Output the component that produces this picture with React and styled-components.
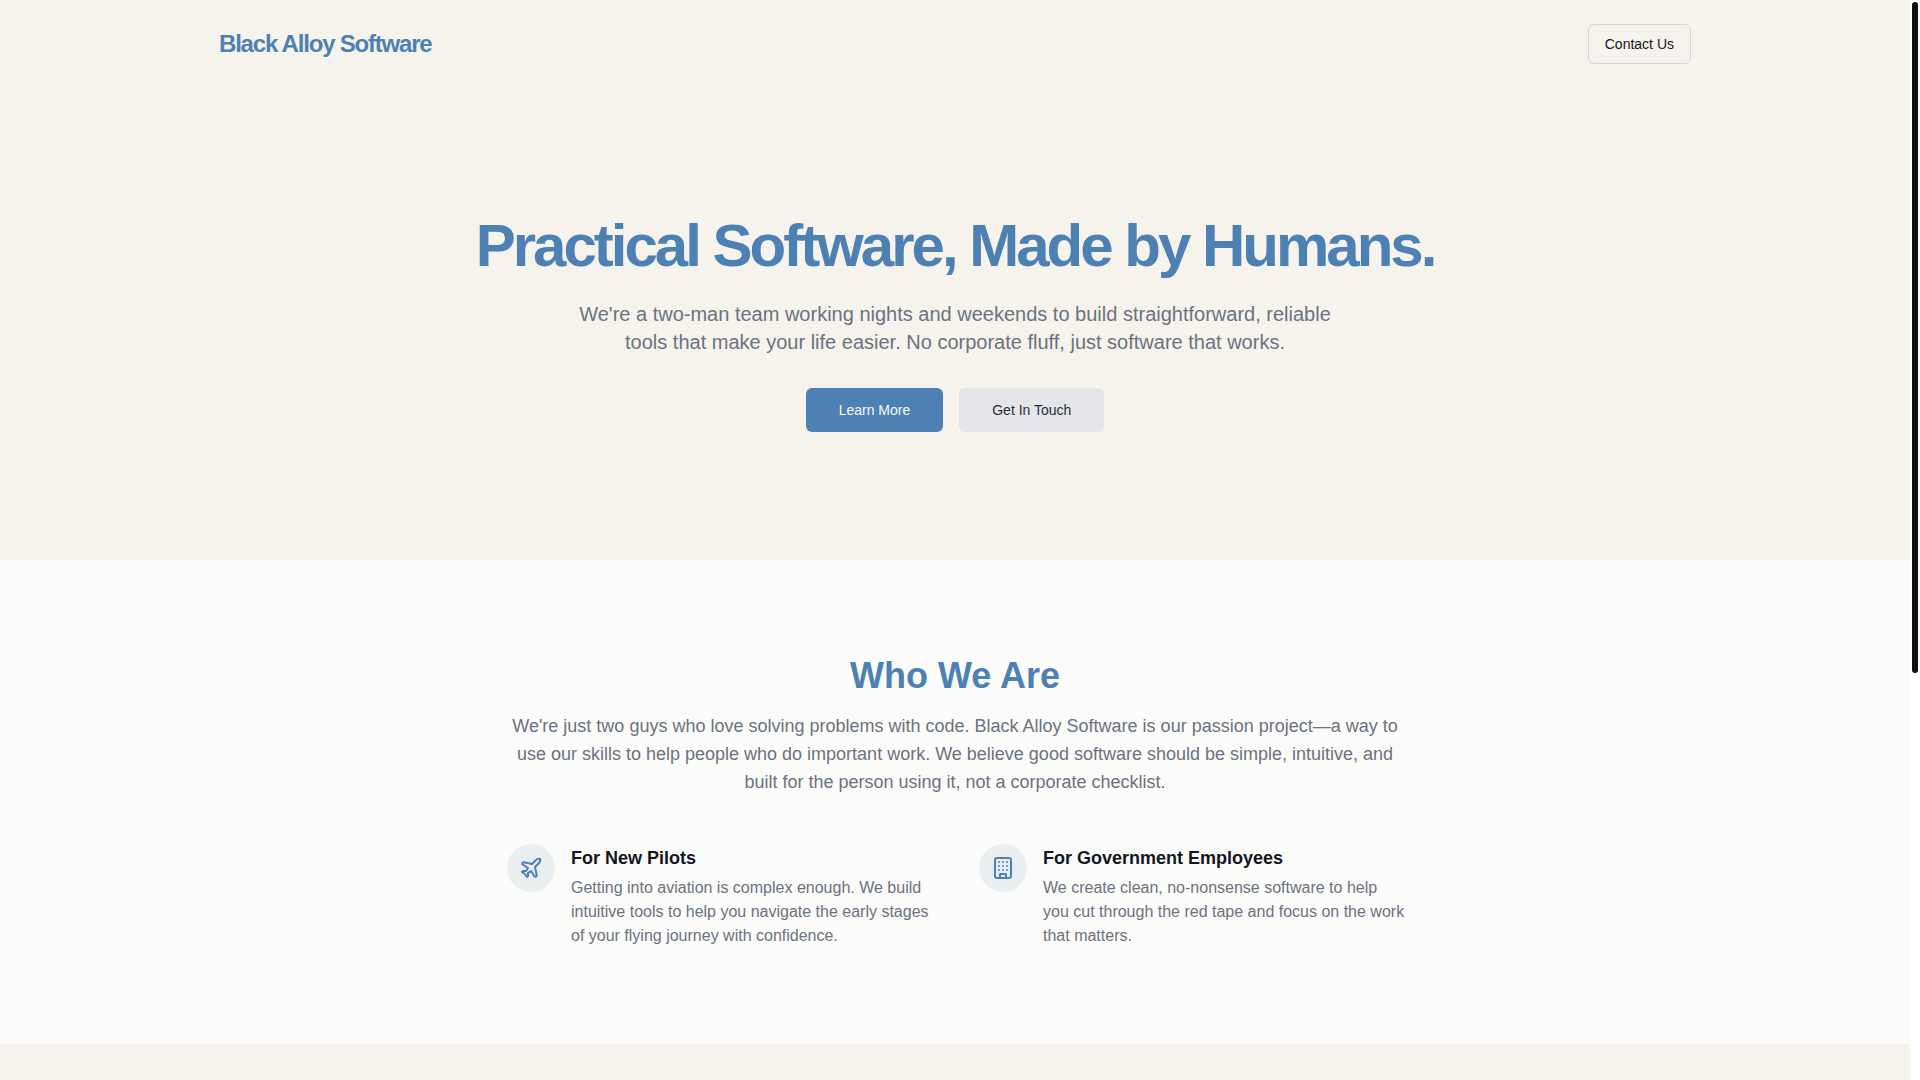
import React from 'react';
import styled, { createGlobalStyle } from 'styled-components';
import { Plane } from 'lucide-react';

const BLUE = '#4d80b3';
const CREAM = '#f6f3ec';
const GRAY = '#6b7280';
const INK = '#14161f';

const GlobalStyle = createGlobalStyle`
  *, *::before, *::after {
    box-sizing: border-box;
  }

  body {
    margin: 0;
    background: #ffffff;
    color: ${INK};
    font-family: 'Liberation Sans', Arial, sans-serif;
    font-size: 16px;
    line-height: 24px;
  }

  h1, h2, h3, p {
    margin: 0;
  }
`;

const Layout = styled.div`
  display: flex;
  min-height: 100vh;
`;

const Page = styled.div`
  flex: 1;
  min-width: 0;
  display: flex;
  flex-direction: column;
  background: ${CREAM};
`;

const ScrollRail = styled.div`
  width: 10px;
  padding: 2px;
  background: #ffffff;
`;

const ScrollThumb = styled.div`
  border-radius: 3px;
  background: #111111;
`;

const Header = styled.header`
  width: 100%;
  max-width: 1536px;
  margin: 0 auto;
  padding: 24px 32px;
  display: flex;
  align-items: center;
  justify-content: space-between;
`;

const Logo = styled.a`
  color: ${BLUE};
  font-size: 24px;
  font-weight: 700;
  line-height: 32px;
  letter-spacing: -0.05em;
  text-decoration: none;
`;

const Button = styled.button`
  height: ${(props) => (props.$large ? '44px' : '40px')};
  padding: 0 ${(props) => (props.$large ? '33px' : '16px')};
  border: ${(props) => (props.$outlined ? '1px solid #d1d5de' : 'none')};
  border-radius: 6px;
  background: ${(props) => props.$background || 'transparent'};
  color: ${(props) => props.$color || INK};
  font-family: inherit;
  font-size: 14px;
  font-weight: 500;
  line-height: 20px;
  cursor: pointer;
`;

const Hero = styled.section`
  padding: 128px 32px;
  display: flex;
  flex-direction: column;
  align-items: center;
  text-align: center;
`;

const HeroTitle = styled.h1`
  color: ${BLUE};
  font-size: 60px;
  line-height: 60px;
  letter-spacing: -0.05em;
`;

const HeroText = styled.p`
  max-width: 768px;
  margin-top: 24px;
  color: ${GRAY};
  font-size: 20px;
  line-height: 28px;
`;

const HeroActions = styled.div`
  margin-top: 32px;
  display: flex;
  gap: 16px;
`;

const About = styled.section`
  padding: 96px 32px;
  background: #fbfbf9;
`;

const AboutInner = styled.div`
  max-width: 896px;
  margin: 0 auto;
`;

const AboutTitle = styled.h2`
  color: ${BLUE};
  font-size: 36px;
  line-height: 40px;
  text-align: center;
`;

const AboutText = styled.p`
  margin-top: 16px;
  color: ${GRAY};
  font-size: 18px;
  line-height: 28px;
  text-align: center;
`;

const Features = styled.div`
  margin-top: 48px;
  display: grid;
  grid-template-columns: 1fr 1fr;
  gap: 48px;
`;

const FeatureItem = styled.article`
  display: flex;
  align-items: flex-start;
  gap: 16px;
`;

const FeatureIcon = styled.div`
  flex-shrink: 0;
  width: 48px;
  height: 48px;
  border-radius: 50%;
  display: flex;
  align-items: center;
  justify-content: center;
  background: #e9eef1;
  color: ${BLUE};
`;

const FeatureTitle = styled.h3`
  font-size: 18px;
  line-height: 28px;
`;

const FeatureText = styled.p`
  margin-top: 4px;
  margin-right: -4px;
  color: ${GRAY};
`;

function BuildingIcon(){
  return (
    <svg
      width='24'
      height='24'
      viewBox='0 0 24 24'
      fill='none'
      stroke='currentColor'
      strokeWidth='2'
      strokeLinecap='round'
      strokeLinejoin='round'
      aria-hidden='true'
    >
      <rect width='16' height='20' x='4' y='2' rx='2' ry='2' />
      <path d='M9 22v-4h6v4' />
      <path d='M8 6h.01M16 6h.01M12 6h.01M12 10h.01M12 14h.01M16 10h.01M16 14h.01M8 10h.01M8 14h.01' />
    </svg>
  )
}

const FEATURES = [
  {
    title: 'For New Pilots',
    text: 'Getting into aviation is complex enough. We build intuitive tools to help you navigate the early stages of your flying journey with confidence.',
    icon: <Plane size={24} />
  },
  {
    title: 'For Government Employees',
    text: 'We create clean, no-nonsense software to help you cut through the red tape and focus on the work that matters.',
    icon: <BuildingIcon />
  }
];

function Feature(props){
  const { title, text, icon } = props;

  return (
    <FeatureItem>
      <FeatureIcon>{icon}</FeatureIcon>
      <div>
        <FeatureTitle>{title}</FeatureTitle>
        <FeatureText>{text}</FeatureText>
      </div>
    </FeatureItem>
  )
}

function App(){
  // share of the page that fits in the window
  const visibleShare = 0.624;

  return (
    <Layout>
      <GlobalStyle />
      <Page>
        <Header>
          <Logo href='#'>Black Alloy Software</Logo>
          <Button $outlined>Contact Us</Button>
        </Header>
        <main>
          <Hero>
            <HeroTitle>Practical Software, Made by Humans.</HeroTitle>
            <HeroText>
              We're a two-man team working nights and weekends to build
              straightforward, reliable tools that make your life easier. No
              corporate fluff, just software that works.
            </HeroText>
            <HeroActions>
              <Button $large $background={BLUE} $color='#f8fafc'>Learn More</Button>
              <Button $large $background='#e4e5e9' $color='#2b2d3a'>Get In Touch</Button>
            </HeroActions>
          </Hero>
          <About>
            <AboutInner>
              <AboutTitle>Who We Are</AboutTitle>
              <AboutText>
                We're just two guys who love solving problems with code. Black
                Alloy Software is our passion project—a way to use our skills to
                help people who do important work. We believe good software
                should be simple, intuitive, and built for the person using it,
                not a corporate checklist.
              </AboutText>
              <Features>
                {FEATURES.map((feature) => (
                  <Feature key={feature.title} {...feature} />
                ))}
              </Features>
            </AboutInner>
          </About>
        </main>
      </Page>
      <ScrollRail>
        <ScrollThumb style={{ height: `${visibleShare * 100}%` }} />
      </ScrollRail>
    </Layout>
  )
}

export default App;
